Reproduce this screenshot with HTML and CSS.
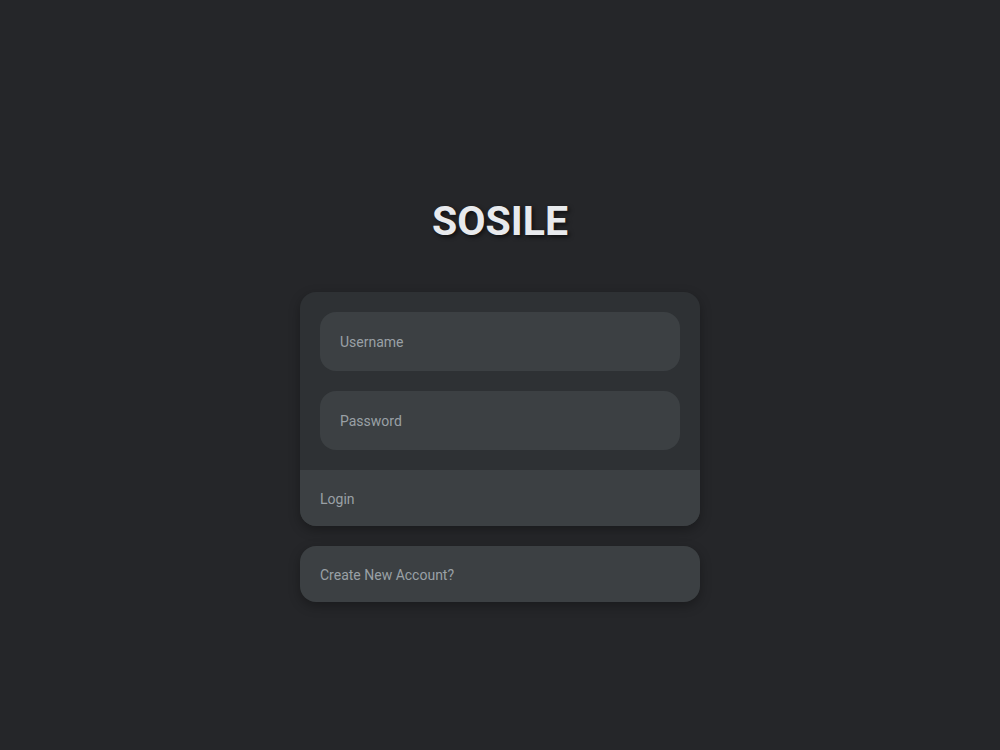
FILE: index.html
```html
<!DOCTYPE html>
<html lang="en">
<head>
<meta charset="utf-8">
<title>SOSILE</title>
<link rel="stylesheet" href="styles.css">
</head>
<body>
<main class="page">
  <h1 class="brand">SOSILE</h1>
  <form class="card">
    <div class="fields">
      <input class="field" type="text" placeholder="Username">
      <input class="field" type="password" placeholder="Password">
    </div>
    <button class="login" type="button">Login</button>
  </form>
  <a class="create" href="#">Create New Account?</a>
</main>
</body>
</html>
```
FILE: styles.css
```css
html {
  background: #252629;
}
body {
  margin: 0;
  background: #252629;
  font-family: Roboto, "Noto Sans", sans-serif;
}
.page {
  min-height: 100vh;
  padding-top: 197px;
  box-sizing: border-box;
  display: flex;
  flex-direction: column;
  align-items: center;
}
.brand {
  margin: 0 0 47px;
  font-size: 41px;
  line-height: 48px;
  font-weight: 700;
  color: #e8eaed;
  text-shadow: 2px 2px 4px rgba(0, 0, 0, 0.6);
}
.card {
  width: 400px;
  background: #2e3134;
  border-radius: 16px;
  box-shadow: 0 4px 12px rgba(0, 0, 0, 0.3);
  overflow: hidden;
}
.fields {
  display: flex;
  flex-direction: column;
  gap: 20px;
  padding: 20px;
}
.field {
  height: 59px;
  box-sizing: border-box;
  border: none;
  border-radius: 16px;
  background: #3c4043;
  padding: 0 20px;
  font-family: Roboto, sans-serif;
  font-size: 14px;
  color: #e8eaed;
  outline: none;
}
.field::placeholder {
  color: #9aa0a6;
}
.login {
  display: block;
  width: 100%;
  height: 56px;
  border: none;
  background: #3c4043;
  text-align: left;
  padding: 2px 20px 0;
  font-family: Roboto, sans-serif;
  font-size: 14px;
  color: #9aa0a6;
  cursor: pointer;
}
.create {
  margin-top: 20px;
  width: 400px;
  height: 56px;
  box-sizing: border-box;
  padding: 2px 20px 0;
  display: flex;
  align-items: center;
  background: #3c4043;
  border-radius: 16px;
  box-shadow: 0 4px 12px rgba(0, 0, 0, 0.3);
  font-size: 14px;
  color: #9aa0a6;
  text-decoration: none;
}
```
